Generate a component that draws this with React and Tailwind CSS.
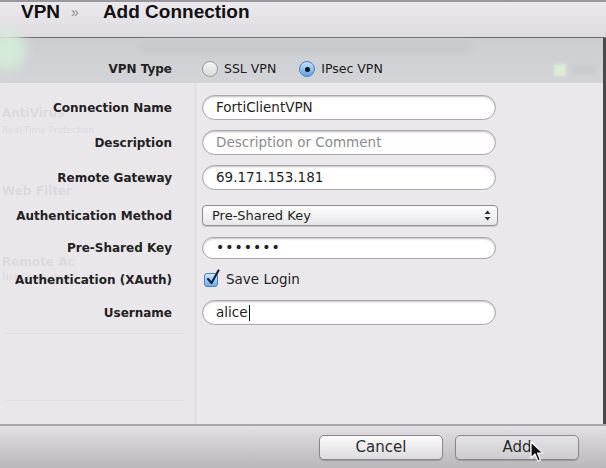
import React from 'react'

const labelFont = { fontFamily: '"DejaVu Sans", "Liberation Sans", sans-serif' }

function Label({ children }) {
  return (
    <div className="w-[172px] shrink-0 text-right text-[12px] font-bold text-[#222]" style={labelFont}>
      {children}
    </div>
  )
}

function Row({ label, className = '', children }) {
  return (
    <div className={`flex h-[25px] items-center gap-[30px] ${className}`}>
      <Label>{label}</Label>
      {children}
    </div>
  )
}

function TextField({ value, placeholder, h = 'h-[25px]', children }) {
  return (
    <div
      className={`flex ${h} w-[294px] items-center rounded-full border border-[#a9a7ab] bg-white px-[13px] text-[13.5px] text-[#1f1f1f] shadow-[inset_0_1px_2px_rgba(0,0,0,0.25)]`}
      style={labelFont}
    >
      {children ? children : value ? <span>{value}</span> : <span className="text-[#8d8b8f]">{placeholder}</span>}
    </div>
  )
}

function Radio({ checked }) {
  if (checked) {
    return (
      <span className="flex h-[16px] w-[16px] items-center justify-center rounded-full border border-[#4a7fc1] bg-gradient-to-b from-[#bfe0fb] to-[#5ea6ea]">
        <span className="h-[5px] w-[5px] rounded-full bg-[#111]" />
      </span>
    )
  }
  return <span className="h-[16px] w-[16px] rounded-full border border-[#9a989c] bg-gradient-to-b from-[#f4f4f4] to-[#dcdcdc]" />
}

export default function App() {
  return (
    <div className="relative h-[468px] w-[606px] overflow-hidden bg-[#ebe8ec]" style={labelFont}>
      {/* header */}
      <div className="flex h-[38px] items-start border-b border-t-2 border-b-[#6c6a6e] border-t-[#9a989c] bg-gradient-to-b from-[#ebe9ed] to-[#dedce0] pl-[21px] pr-[4px]">
        <div
          className="flex items-center text-[19px] font-bold leading-[20px] text-[#111]"
          style={{ fontFamily: '"Liberation Sans", Arial, sans-serif' }}
        >
          <span>VPN</span>
          <span className="ml-[11px] mr-[24px] text-[14px] font-normal text-[#8a888c]">»</span>
          <span>Add Connection</span>
        </div>
      </div>

      {/* body */}
      <div className="relative h-[386px] border-r-[3px] border-r-[#4a484c]">
        {/* dimmed page behind the sheet */}
        <div className="absolute inset-0 flex">
          <div className="flex w-[197px] flex-col border-r-[3px] border-r-[#e4e1e5] bg-[#eae7eb] pl-[2px] pt-[66px] text-[12px] text-[#dcd9de] blur-[0.6px]">
            <div className="font-bold">AntiVirus</div>
            <div className="mt-[2px] text-[9px]">Real-Time Protection</div>
            <div className="mt-[44px] font-bold">Web Filter</div>
            <div className="mt-[53px] font-bold">Remote Ac</div>
            <div className="text-[9px]">Not Connected</div>
            <div className="ml-[4px] mt-[49px] h-px w-[178px] bg-[#e2dfe3]" />
            <div className="ml-[4px] mt-[66px] h-px w-[178px] bg-[#e2dfe3]" />
          </div>
          <div className="flex-1" />
        </div>

        <div className="relative">
          {/* VPN type band */}
          <div className="relative flex h-[45px] flex-col justify-end bg-gradient-to-b from-[#cbced1] to-[#d3d4d7]">
            <div className="absolute left-[-14px] top-[-8px] h-[40px] w-[40px] rounded-full bg-[#d6ead8] blur-[6px]" />
            <div className="absolute left-[140px] top-[4px] h-[10px] w-[330px] rounded bg-[#c6c9cc] blur-[3px]" />
            <div className="absolute left-[554px] top-[26px] h-[12px] w-[12px] bg-[#d8ecd6] blur-[1px]" />
            <div className="absolute left-[572px] top-[28px] h-[8px] w-[24px] bg-[#c8cbce] blur-[2px]" />
            <div className="relative mb-[1px] flex h-[26px] items-center gap-[30px]">
              <Label>VPN Type</Label>
              <div className="flex items-center text-[12.5px] text-[#1b1b1b]">
                <Radio />
                <span className="ml-[6px]">SSL VPN</span>
                <span className="ml-[23px]">
                  <Radio checked />
                </span>
                <span className="ml-[6px]">IPsec VPN</span>
              </div>
            </div>
          </div>

          <Row label="Connection Name" className="mt-[12px]">
            <TextField value="FortiClientVPN" />
          </Row>
          <Row label="Description" className="mt-[10px]">
            <TextField placeholder="Description or Comment" />
          </Row>
          <Row label="Remote Gateway" className="mt-[10px]">
            <TextField value="69.171.153.181" />
          </Row>
          <Row label="Authentication Method" className="mt-[13px]">
            <div className="flex h-[21px] w-[296px] items-center justify-between rounded-[4px] border border-[#8f8d91] bg-gradient-to-b from-[#ffffff] to-[#e6e5e8] pl-[9px] pr-[6px] text-[13px] text-[#1f1f1f] shadow-[0_1px_1px_rgba(0,0,0,0.15)]">
              <span>Pre-Shared Key</span>
              <svg width="7" height="11" viewBox="0 0 7 11">
                <path d="M3.5 0.5 L6.5 4 L0.5 4 Z" fill="#333" />
                <path d="M3.5 10.5 L6.5 7 L0.5 7 Z" fill="#333" />
              </svg>
            </div>
          </Row>
          <Row label="Pre-Shared Key" className="mt-[7px]">
            <TextField h="h-[22px]">
              <span className="tracking-[1px] text-[14px] text-[#222]">•••••••</span>
            </TextField>
          </Row>
          <Row label="Authentication (XAuth)" className="mt-[7px]">
            <div className="flex items-center text-[13.5px] text-[#1f1f1f]">
              <span className="relative ml-[2px] h-[14px] w-[14px] rounded-[3px] border border-[#4a7fc1] bg-gradient-to-b from-[#cde6fb] to-[#6aaef0]">
                <svg className="absolute left-[1px] top-[-5px]" width="14" height="17" viewBox="0 0 14 17">
                  <path d="M2 10 L5.5 14 L12.5 1.5" fill="none" stroke="#13253f" strokeWidth="2.2" strokeLinecap="round" strokeLinejoin="round" />
                </svg>
              </span>
              <span className="ml-[8px]">Save Login</span>
            </div>
          </Row>
          <Row label="Username" className="mt-[8px]">
            <TextField>
              <span>alice</span>
              <span className="ml-px h-[16px] w-px bg-[#111]" />
            </TextField>
          </Row>
        </div>
      </div>

      {/* footer */}
      <div className="flex h-[44px] justify-end gap-[12px] border-t-2 border-t-[#a9a7ab] bg-gradient-to-b from-[#e2e0e3] to-[#b9b7ba] pr-[27px] pt-[9px]">
        <button
          className="h-[25px] w-[124px] rounded-[5px] border border-[#8a888c] bg-gradient-to-b from-[#fbfbfb] to-[#dcdbde] text-[15px] text-[#2b2b2b] shadow-[0_1px_1px_rgba(0,0,0,0.2)]"
          style={labelFont}
        >
          Cancel
        </button>
        <button
          className="h-[25px] w-[124px] rounded-[5px] border border-[#8a888c] bg-gradient-to-b from-[#e4e3e6] to-[#cdccd0] text-[15px] text-[#2b2b2b] shadow-[0_1px_1px_rgba(0,0,0,0.2)]"
          style={labelFont}
        >
          Add
        </button>
      </div>

      {/* mouse pointer */}
      <svg className="absolute left-[530px] top-[441px]" width="14" height="22" viewBox="0 0 14 22">
        <path d="M1 1 L1 17 L5 13 L8 20 L10.5 19 L7.5 12 L13 12 Z" fill="#111" stroke="#fff" strokeWidth="1.2" strokeLinejoin="round" />
      </svg>
    </div>
  )
}
